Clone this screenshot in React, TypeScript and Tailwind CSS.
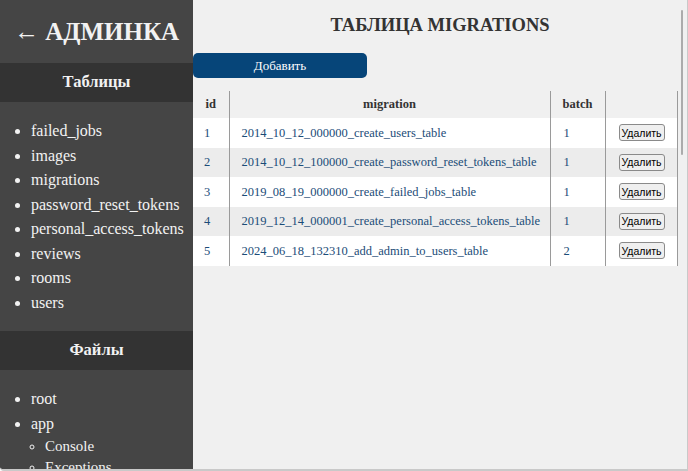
import React from "react";

const tables = [
  "failed_jobs",
  "images",
  "migrations",
  "password_reset_tokens",
  "personal_access_tokens",
  "reviews",
  "rooms",
  "users",
];

const rows = [
  { id: 1, migration: "2014_10_12_000000_create_users_table", batch: 1 },
  { id: 2, migration: "2014_10_12_100000_create_password_reset_tokens_table", batch: 1 },
  { id: 3, migration: "2019_08_19_000000_create_failed_jobs_table", batch: 1 },
  { id: 4, migration: "2019_12_14_000001_create_personal_access_tokens_table", batch: 1 },
  { id: 5, migration: "2024_06_18_132310_add_admin_to_users_table", batch: 2 },
];

export default function App() {
  return (
    <div className="relative flex h-[471px] w-[688px] overflow-hidden rounded-bl-[4px] border-r border-b-2 border-[#c9c9c9] bg-[#f0f0f0] font-[family-name:'Liberation_Serif',serif]">
      {/* sidebar */}
      <aside className="w-[193px] shrink-0 bg-[#454545] text-[#f2f2f2]">
        <h1 className="flex h-[63px] items-center justify-center text-[25px] font-bold">
          <span className="font-normal">←</span>&nbsp;АДМИНКА
        </h1>

        <h2 className="flex h-[39px] items-center justify-center bg-[#333333] text-[16.5px] font-bold">Таблицы</h2>
        <ul className="list-disc pt-[17px] pb-[16px] pl-[31px] text-[16px] leading-[24.5px]">
          {tables.map((t) => (
            <li key={t}>{t}</li>
          ))}
        </ul>

        <h2 className="flex h-[39px] items-center justify-center bg-[#333333] text-[16.5px] font-bold">Файлы</h2>
        <ul className="list-disc pt-[17px] pl-[31px] text-[16px] leading-[24.5px]">
          <li>root</li>
          <li>
            app
            <ul className="list-[circle] pl-[14px] text-[15px] leading-[21px]">
              <li>Console</li>
              <li>Exceptions</li>
            </ul>
          </li>
        </ul>
      </aside>

      {/* main */}
      <main className="flex-1 text-[#333]">
        <h1 className="flex h-[53px] items-center justify-center pb-[2px] text-[18.5px] font-bold">ТАБЛИЦА MIGRATIONS</h1>

        <button className="h-[25px] w-[174px] rounded-[5px] bg-[#064579] text-[13px] text-white">Добавить</button>

        <table className="mt-[13px] w-[485px] border-collapse text-[12.5px]">
          <thead>
            <tr className="h-[27px]">
              <th className="w-[36px] border-r border-[#9a9a9a] font-bold">id</th>
              <th className="w-[321px] border-r border-[#9a9a9a] font-bold">migration</th>
              <th className="w-[55px] border-r border-[#9a9a9a] font-bold">batch</th>
              <th className="border-r border-[#9a9a9a]"></th>
            </tr>
          </thead>
          <tbody>
            {rows.map((r, i) => (
              <tr key={r.id} className={i % 2 === 0 ? "h-[29.5px] bg-white" : "h-[29.5px] bg-[#ececec]"}>
                <td className="border-r border-[#9a9a9a] pl-[11px] text-[#1b4c78]">{r.id}</td>
                <td className="border-r border-[#9a9a9a] pl-[12px] text-[#1b4c78]">{r.migration}</td>
                <td className="border-r border-[#9a9a9a] pl-[13px] text-[#1b4c78]">{r.batch}</td>
                <td className="border-r border-[#9a9a9a] pl-[13px]">
                  <button className="h-[17px] rounded-[3px] border border-[#8a8a8a] bg-[#efefef] px-[2px] font-[family-name:'Liberation_Sans',sans-serif] text-[10.5px] leading-none text-black">
                    Удалить
                  </button>
                </td>
              </tr>
            ))}
          </tbody>
        </table>
      </main>

      {/* scrollbar thumb */}
      <div className="absolute top-[10px] right-[4px] h-[145px] w-[2px] rounded bg-[#ababab]"></div>
    </div>
  );
}
